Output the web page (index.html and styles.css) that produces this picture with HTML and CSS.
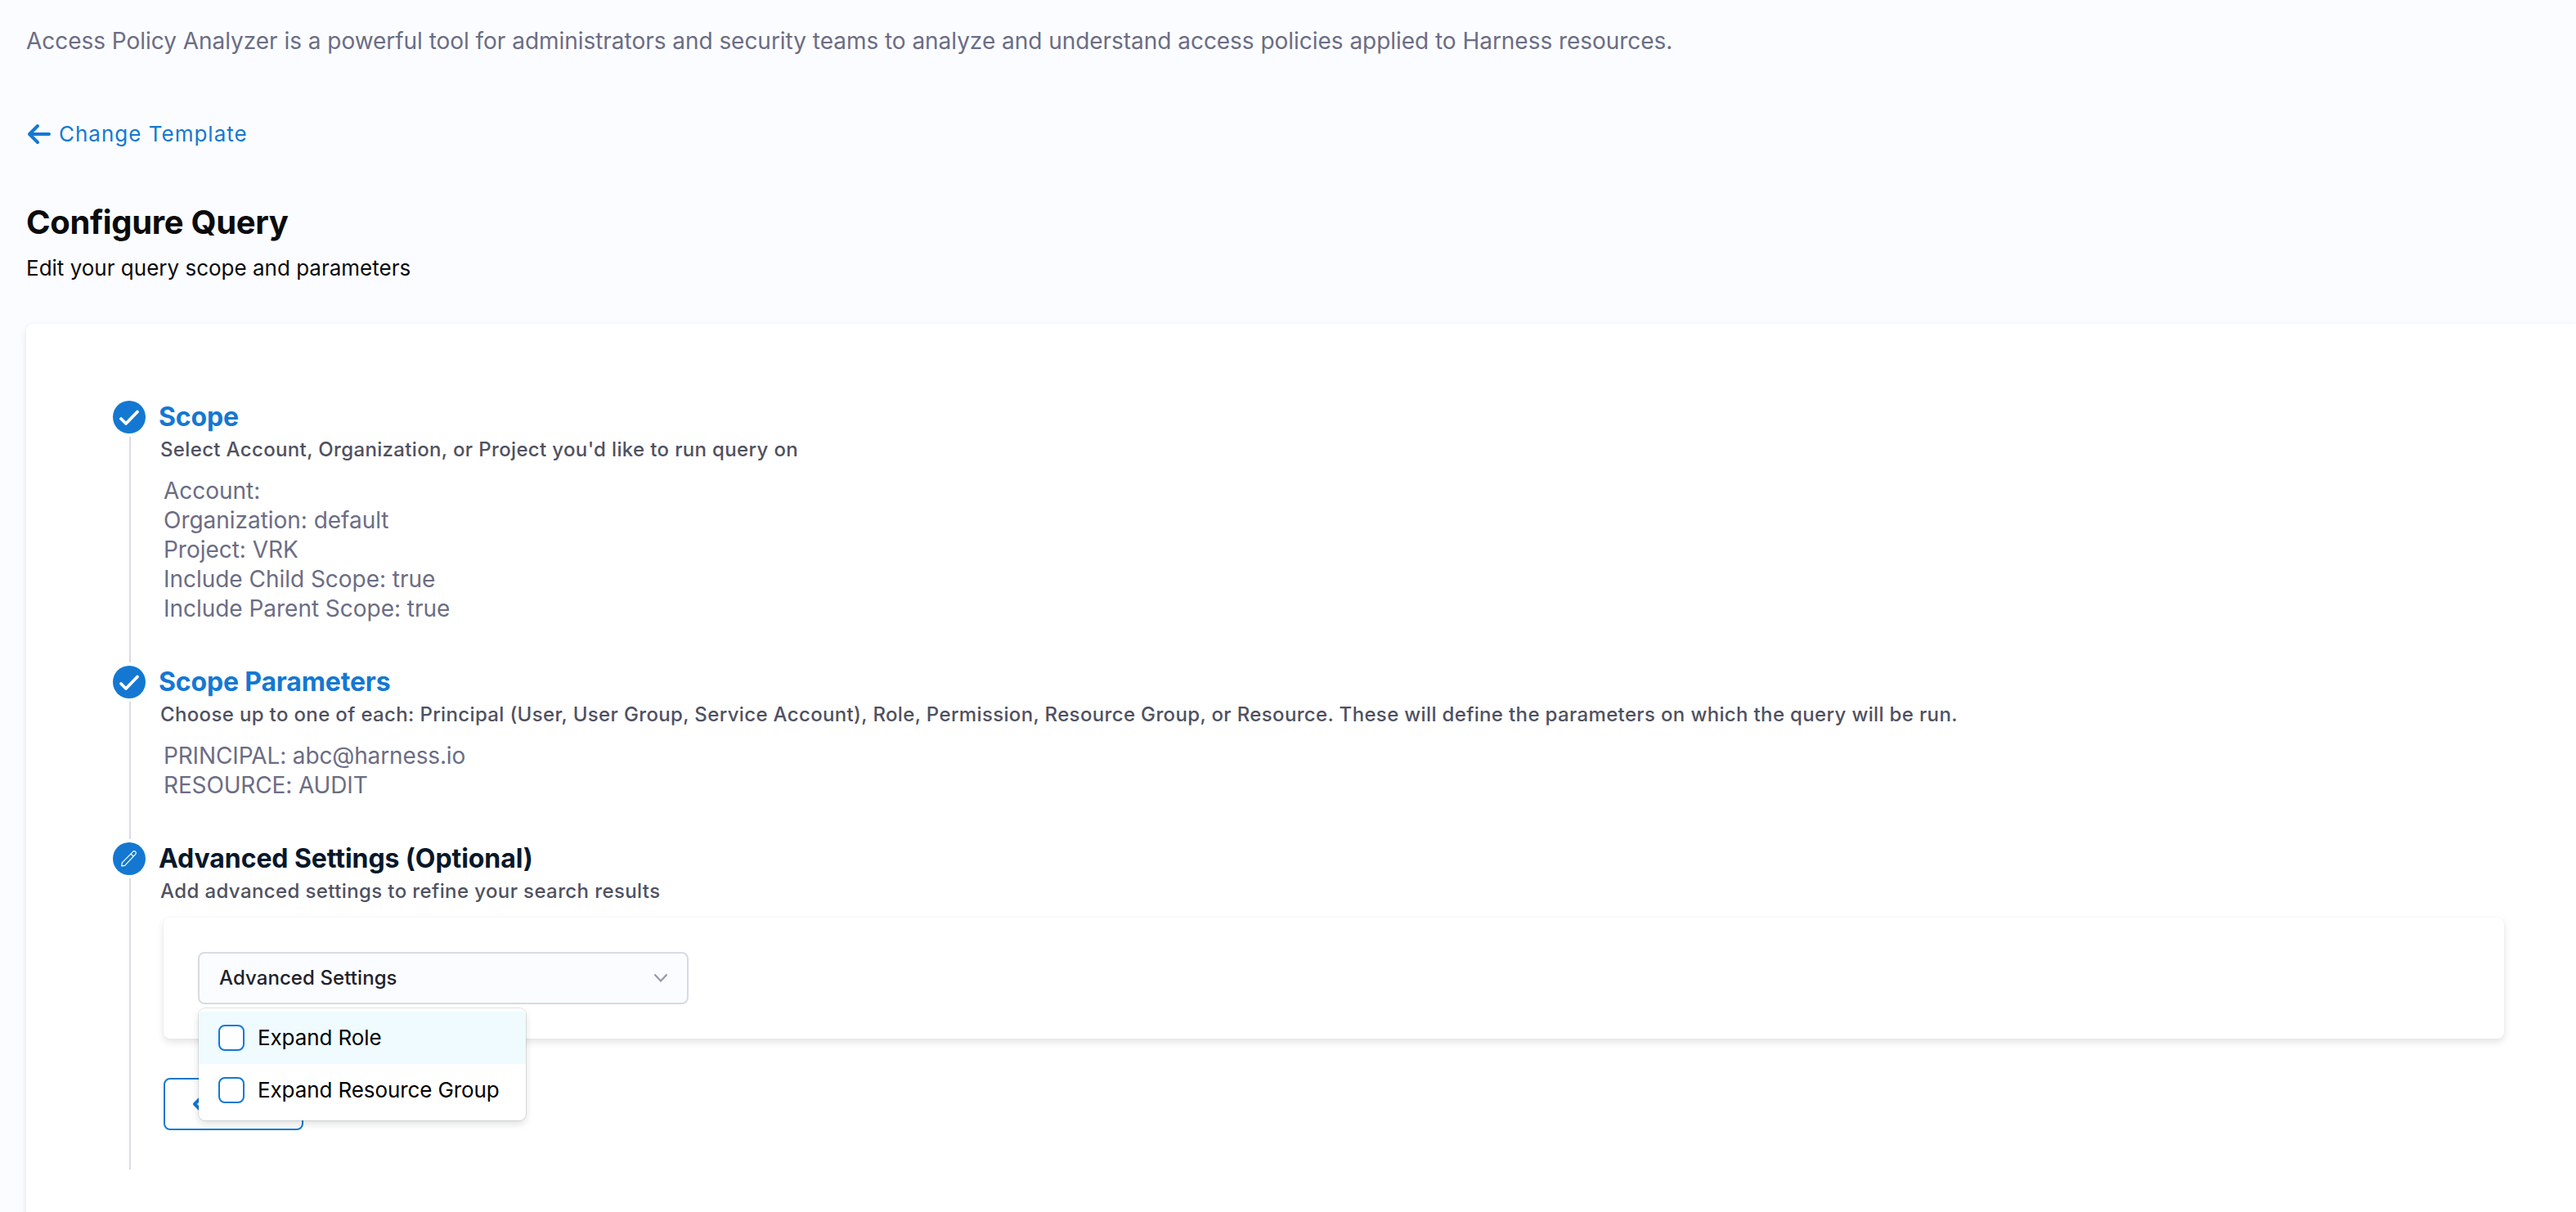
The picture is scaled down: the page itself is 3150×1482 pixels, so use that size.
FILE: index.html
```
<!DOCTYPE html>
<html lang="en">
<head>
<meta charset="utf-8">
<title>Access Policy Analyzer</title>
<link rel="stylesheet" href="styles.css">
</head>
<body>
<main class="page">
  <p class="intro">Access Policy Analyzer is a powerful tool for administrators and security teams to analyze and understand access policies applied to Harness resources.</p>
  <a class="back-link">
    <svg width="30" height="26" viewBox="0 0 30 26" fill="none" stroke="currentColor" stroke-width="4" stroke-linecap="round" stroke-linejoin="round"><path d="M14 3 4 13l10 10M5 13h23"/></svg>
    <span>Change Template</span>
  </a>
  <h1 class="heading">Configure Query</h1>
  <p class="subheading">Edit your query scope and parameters</p>

  <section class="card">
    <div class="step">
      <div class="rail">
        <svg class="badge" viewBox="0 0 40 40" fill="none"><circle cx="20" cy="20" r="20" fill="#1478d2"/><path d="m10 22 6 6 14-14.500" stroke="#fff" stroke-width="3.800" stroke-linecap="round" stroke-linejoin="round"/></svg>
        <div class="line"></div>
      </div>
      <div class="content">
        <h2 class="title">Scope</h2>
        <p class="description">Select Account, Organization, or Project you'd like to run query on</p>
        <ul class="summary">
          <li>Account:</li>
          <li>Organization: default</li>
          <li>Project: VRK</li>
          <li>Include Child Scope: true</li>
          <li>Include Parent Scope: true</li>
        </ul>
      </div>
    </div>

    <div class="step">
      <div class="rail">
        <svg class="badge" viewBox="0 0 40 40" fill="none"><circle cx="20" cy="20" r="20" fill="#1478d2"/><path d="m10 22 6 6 14-14.500" stroke="#fff" stroke-width="3.800" stroke-linecap="round" stroke-linejoin="round"/></svg>
        <div class="line"></div>
      </div>
      <div class="content">
        <h2 class="title">Scope Parameters</h2>
        <p class="description">Choose up to one of each: Principal (User, User Group, Service Account), Role, Permission, Resource Group, or Resource. These will define the parameters on which the query will be run.</p>
        <ul class="summary summary-params">
          <li>PRINCIPAL: abc@harness.io</li>
          <li>RESOURCE: AUDIT</li>
        </ul>
      </div>
    </div>

    <div class="step step-last">
      <div class="rail">
        <svg class="badge" viewBox="0 0 40 40" fill="none"><circle cx="20" cy="20" r="20" fill="#1478d2"/><path d="m10.800 28.800.5-4L24.700 11.300a2.200 2.200 0 0 1 3.100 3.100L14.700 28.300ZM22 14l3.300 3.300" stroke="#fff" stroke-width="1.200" stroke-linejoin="round"/></svg>
        <div class="line"></div>
      </div>
      <div class="content">
        <h2 class="title title-current">Advanced Settings (Optional)</h2>
        <p class="description description-current">Add advanced settings to refine your search results</p>
        <div class="panel">
          <div class="select">
            <span>Advanced Settings</span>
            <svg width="18" height="12" viewBox="0 0 18 12" fill="none" stroke="#9293ab" stroke-width="2"><path d="m1.500 1.500 7.500 8 7.500-8"/></svg>
            <div class="menu">
              <div class="option option-active"><span class="checkbox"></span>Expand Role</div>
              <div class="option"><span class="checkbox"></span>Expand Resource Group</div>
            </div>
          </div>
        </div>
        <div class="back-button">
          <svg width="12" height="20" viewBox="0 0 12 20" fill="none" stroke="currentColor" stroke-width="4" stroke-linecap="round" stroke-linejoin="round"><path d="m9 3-7 7 7 7"/></svg>
        </div>
      </div>
    </div>
  </section>
</main>
</body>
</html>
```
FILE: styles.css
```
* {
  box-sizing: border-box;
}

body {
  margin: 0;
  height: 1482px;
  overflow: hidden;
  background: #fbfcff;
  color: #0b0b0d;
  font-family: Inter, "Liberation Sans", sans-serif;
}

h1, h2, p, ul {
  margin: 0;
  padding: 0;
}

.page {
  display: flex;
  flex-direction: column;
  min-height: 1482px;
  padding: 32px 0 0 32px;
}

.intro {
  color: #6b6d85;
  font-size: 28px;
  line-height: 36px;
  letter-spacing: -0.036px;
}

.back-link {
  display: flex;
  align-items: center;
  gap: 10px;
  margin-top: 80px;
  color: #1478d2;
  font-size: 26px;
  line-height: 32px;
  letter-spacing: 1px;
}

.heading {
  margin-top: 68px;
  font-size: 40px;
  font-weight: 700;
  line-height: 48px;
  letter-spacing: -0.35px;
}

.subheading {
  margin-top: 16px;
  font-size: 26px;
  line-height: 32px;
}

.card {
  flex: 1 0 auto;
  margin-top: 52px;
  padding: 94px 88px 60px 106px;
  border-radius: 8px 0 0 0;
  background: #fff;
  box-shadow: 0 0 2px rgba(40, 41, 61, 0.06), 0 4px 8px rgba(96, 97, 112, 0.14);
}

.step {
  display: flex;
  gap: 16px;
}

.rail {
  display: flex;
  flex: 0 0 40px;
  flex-direction: column;
  align-items: center;
  gap: 4px;
  padding-bottom: 4px;
}

.badge {
  flex: none;
  width: 40px;
  height: 40px;
}

.line {
  flex: 1;
  width: 2px;
  margin-left: 2px;
  background: #d9dae5;
}

.content {
  flex: 1;
  min-width: 0;
  padding-bottom: 52px;
}

.step-last .rail {
  padding-bottom: 0;
}

.step-last .content {
  padding-bottom: 48px;
}

.title {
  color: #1478d2;
  font-size: 32px;
  font-weight: 700;
  line-height: 40px;
  letter-spacing: -0.16px;
}

.title-current {
  color: #07182b;
  letter-spacing: -0.08px;
}

.description {
  margin: 6px 0 0 2px;
  color: #4f5162;
  font-size: 24px;
  font-weight: 500;
  line-height: 28px;
  letter-spacing: 0.35px;
}

.description-current {
  letter-spacing: 0.39px;
}

.summary {
  margin: 18px 0 0 6px;
  color: #6b6d85;
  font-size: 28px;
  line-height: 36px;
  letter-spacing: -0.03px;
  list-style: none;
}

.summary-params {
  letter-spacing: -0.14px;
}

.panel {
  margin: 18px 0 48px 6px;
  padding: 42px;
  border-radius: 8px;
  background: #fff;
  box-shadow: 0 0 2px rgba(40, 41, 61, 0.04), 0 4px 8px rgba(60, 60, 70, 0.14);
}

.select {
  position: relative;
  display: flex;
  align-items: center;
  justify-content: space-between;
  width: 600px;
  height: 64px;
  padding: 0 23px 0 24px;
  border: 2px solid #d9dae5;
  border-radius: 8px;
  background: #fbfcff;
  color: #22222a;
  font-size: 24px;
  font-weight: 500;
  line-height: 60px;
  letter-spacing: 0.08px;
}

/* Floating list below the select */
.menu {
  position: absolute;
  top: 67px;
  left: -1px;
  width: 400px;
  height: 137px;
  padding: 4px 0;
  border-radius: 8px;
  background: #fff;
  box-shadow: 0 0 0 1px rgba(16, 22, 26, 0.1), 0 4px 10px rgba(16, 22, 26, 0.14);
  color: #000;
  font-size: 26px;
  font-weight: 400;
  line-height: 32px;
  letter-spacing: -0.1px;
}

.option {
  display: flex;
  align-items: center;
  gap: 16px;
  height: 64px;
  padding-left: 24px;
}

.option-active {
  background: #effbff;
}

.checkbox {
  width: 32px;
  height: 32px;
  border: 2px solid #1478d2;
  border-radius: 8px;
  background: #fff;
}

.back-button {
  display: flex;
  align-items: center;
  width: 171px;
  height: 64px;
  margin-left: 6px;
  padding-left: 34px;
  border: 2px solid #1478d2;
  border-radius: 8px;
  color: #1478d2;
}
```
